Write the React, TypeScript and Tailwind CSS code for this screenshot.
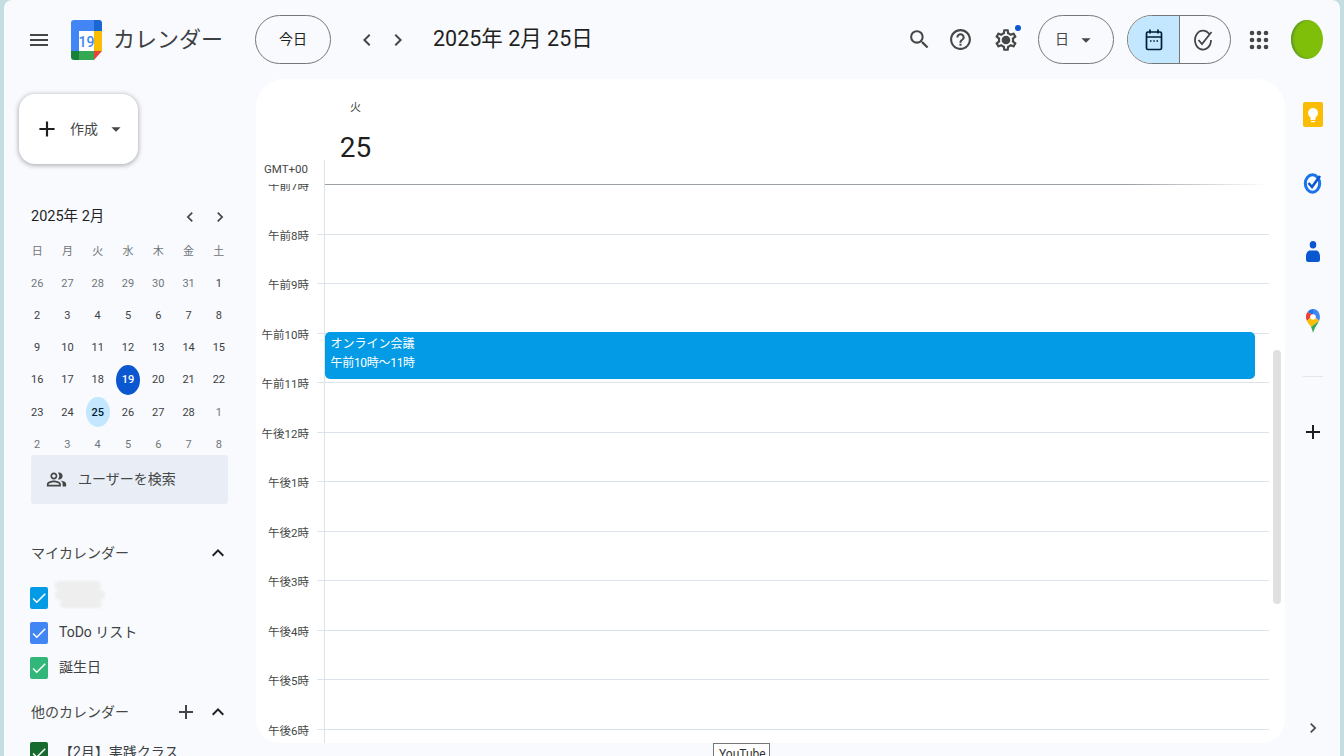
import {
  MdAdd,
  MdArrowDropDown,
  MdCheck,
  MdChevronLeft,
  MdChevronRight,
  MdExpandLess,
  MdHelpOutline,
  MdMenu,
  MdOutlinePeopleAlt,
  MdOutlineSettings,
  MdSearch,
} from "react-icons/md";

const FONT = "font-['Roboto','Noto_Sans_CJK_JP',sans-serif]";

const weekDays = ["日", "月", "火", "水", "木", "金", "土"];
const days = [
  26, 27, 28, 29, 30, 31, 1,
  2, 3, 4, 5, 6, 7, 8,
  9, 10, 11, 12, 13, 14, 15,
  16, 17, 18, 19, 20, 21, 22,
  23, 24, 25, 26, 27, 28, 1,
  2, 3, 4, 5, 6, 7, 8,
];
const hours = [
  "午前7時", "午前8時", "午前9時", "午前10時", "午前11時", "午後12時",
  "午後1時", "午後2時", "午後3時", "午後4時", "午後5時", "午後6時",
];

function CalendarLogo() {
  return (
    <svg width="31" height="40" viewBox="0 0 31 40" className="shrink-0">
      <path d="M3 0H23V11H8V31H0V3a3 3 0 0 1 3-3z" fill="#4285f4" />
      <path d="M23 0h5a3 3 0 0 1 3 3v8h-8z" fill="#1967d2" />
      <rect x="23" y="11" width="8" height="20" fill="#fbbc04" />
      <rect x="8" y="31" width="15" height="9" fill="#34a853" />
      <path d="M0 31h8v9H3a3 3 0 0 1-3-3z" fill="#188038" />
      <path d="M23 31h8l-8 9z" fill="#ea4335" />
      <rect x="8" y="11" width="15" height="20" fill="#fff" />
      <text x="15.5" y="26.5" textAnchor="middle" fontSize="14" fontFamily="Roboto" fontWeight="500" fill="#4285f4">19</text>
    </svg>
  );
}

function Checkbox({ color }: { color: string }) {
  return (
    <span className={`flex h-[22px] w-[18px] shrink-0 items-center justify-center rounded-[2px] text-white ${color}`}>
      <MdCheck size={18} />
    </span>
  );
}

function MiniCalendar() {
  return (
    <div className="ml-[18px] grid w-[212px] grid-cols-7 text-center text-[11px] leading-none">
      {weekDays.map((d) => (
        <div key={d} className="flex h-[32.2px] items-center justify-center text-[#70757a]">{d}</div>
      ))}
      {days.map((d, i) => {
        const muted = i < 6 || i > 33;
        return (
          <div key={i} className="flex h-[32.2px] items-center justify-center">
            {i === 24 && <span className="flex h-[30px] w-[24px] items-center justify-center rounded-[50%] bg-[#0b57d0] font-medium text-white">{d}</span>}
            {i === 30 && <span className="flex h-[30px] w-[24px] items-center justify-center rounded-[50%] bg-[#c2e7ff] font-medium text-[#001d35]">{d}</span>}
            {i !== 24 && i !== 30 && <span className={muted ? "text-[#70757a]" : "text-[#3c4043]"}>{d}</span>}
          </div>
        );
      })}
    </div>
  );
}

function Sidebar() {
  return (
    <aside className="w-[252px] shrink-0 text-[#1f1f1f]">
      <div className="ml-[15px] mt-[15px] flex h-[70px] w-[119px] items-center rounded-2xl bg-white pl-[15px] shadow-[0_1px_4px_1px_rgba(60,64,67,0.35)]">
        <MdAdd size={26} className="text-[#1f1f1f]" />
        <span className="ml-[10px] text-[14px] text-[#444746]">作成</span>
        <MdArrowDropDown size={22} className="ml-[7px] text-[#444746]" />
      </div>

      <div className="ml-[27px] mt-[43px] flex h-5 w-[200px] items-center justify-between text-[14.5px]">
        <span>2025年 2月</span>
        <span className="flex gap-[10px] pr-[1px] text-[#444746]">
          <MdChevronLeft size={20} />
          <MdChevronRight size={20} />
        </span>
      </div>

      <div className="mt-2">
        <MiniCalendar />
      </div>

      <div className="relative ml-[27px] -mt-[5px] flex h-[49px] w-[197px] items-center rounded-[3px] bg-[#e9eef6] pl-[15px] text-[14px] text-[#444746]">
        <MdOutlinePeopleAlt size={21} />
        <span className="ml-[11px]">ユーザーを検索</span>
      </div>

      <div className="ml-[27px] mt-[37px] flex h-6 w-[199px] items-center justify-between text-[14px] text-[#444746]">
        <span>マイカレンダー</span>
        <MdExpandLess size={24} className="text-[#1f1f1f]" />
      </div>

      <div className="ml-[26px] mt-[15px] text-[14px] text-[#3c4043]">
        <div className="flex h-[35px] items-center gap-[7px]">
          <Checkbox color="bg-[#039be5]" />
          <span className="-mt-[6px] flex flex-col gap-0 blur-[1px]">
            <span className="h-[9px] w-[46px] rounded-full bg-[#eeeeee]" />
            <span className="h-[10px] w-[50px] rounded-full bg-[#eeeeee]" />
            <span className="ml-[5px] h-[8px] w-[42px] rounded-full bg-[#eeeeee]" />
          </span>
        </div>
        <div className="flex h-[35px] items-center gap-[11px]">
          <Checkbox color="bg-[#4285f4]" />
          <span>ToDo リスト</span>
        </div>
        <div className="flex h-[35px] items-center gap-[11px]">
          <Checkbox color="bg-[#33b679]" />
          <span>誕生日</span>
        </div>
      </div>

      <div className="ml-[27px] mt-[15px] flex h-6 w-[199px] items-center text-[14px] text-[#444746]">
        <span>他のカレンダー</span>
        <MdAdd size={24} className="ml-auto" />
        <MdExpandLess size={24} className="ml-[8px] text-[#1f1f1f]" />
      </div>

      <div className="ml-[26px] mt-[11px] flex h-[35px] items-center gap-[11px] text-[14px] text-[#3c4043]">
        <Checkbox color="bg-[#176b2e]" />
        <span>【2月】実践クラス</span>
      </div>
    </aside>
  );
}

function DayGrid() {
  return (
    <main className="relative h-[664px] w-[1029px] shrink-0 overflow-hidden rounded-t-[28px] rounded-b-[24px] bg-white">
      <div className="flex h-[105px]">
        <div className="flex w-[68px] flex-col justify-end pb-[6px] pl-[8px] text-[11.5px] text-[#444746]">GMT+00</div>
        <div className="h-[24px] w-px self-end bg-[#dde3ea]" />
        <div className="flex w-[61px] flex-col items-center pt-[21px] text-[#1f1f1f]">
          <span className="text-[11px] text-[#444746]">火</span>
          <span className="mt-[10px] text-[28px] leading-[42px] font-normal">25</span>
        </div>
      </div>

      <div className="h-[559px] overflow-hidden">
        {hours.map((h, i) => (
          <div key={h} className="flex h-[49.55px]">
            <span className="-mt-[7px] h-[18px] w-[53px] shrink-0 text-right text-[11.5px] leading-[18px] text-[#444746]">{h}</span>
            {i === 0 ? (
              <>
                <div className="w-[15px] shrink-0" />
                <div className="w-[945px] border-l border-[#dde3ea]">
                  <div className="h-px bg-linear-to-r from-[#9aa0a6] via-[#9aa0a6] via-85% to-transparent" />
                </div>
              </>
            ) : (
              <>
                <div className="ml-[8px] w-[7px] shrink-0 border-t border-[#dde3ea]" />
                <div className="w-[945px] border-l border-t border-[#dde3ea]" />
              </>
            )}
          </div>
        ))}
      </div>

      {/* event sits over the hour grid */}
      <div className="absolute left-[68.5px] top-[253px] h-[47px] w-[930px] rounded-[5px] bg-[#039be5] pl-[6px] pt-[3px] text-[12px] leading-[19px] text-white">
        <div>オンライン会議</div>
        <div className="tracking-[-0.3px]">午前10時～11時</div>
      </div>

      <div className="absolute left-[1017px] top-[271px] h-[254px] w-2 rounded-full bg-[#e0e0e0]" />
    </main>
  );
}

function SideRail() {
  return (
    <div className="flex h-[677px] w-[55px] shrink-0 flex-col items-center">
      <div className="flex h-[69px] w-full items-center justify-center pt-[1px]">
        <svg width="20" height="25" viewBox="0 0 20 25">
          <rect width="20" height="25" rx="2" fill="#fbbc04" />
          <circle cx="10" cy="11" r="5" fill="#fff" />
          <rect x="7.5" y="15" width="5" height="3" fill="#fff" />
          <rect x="8" y="19" width="4" height="1.2" fill="#fff" />
        </svg>
      </div>
      <div className="flex h-[69px] w-full items-center justify-center">
        <svg width="20" height="24" viewBox="0 0 20 24">
          <ellipse cx="9.5" cy="12.5" rx="7.2" ry="8.7" fill="none" stroke="#1a73e8" strokeWidth="3" />
          <path d="M5.5 12l3.5 4 8-11" fill="none" stroke="#0b57d0" strokeWidth="2.6" />
        </svg>
      </div>
      <div className="flex h-[69px] w-full items-center justify-center">
        <svg width="14" height="21" viewBox="0 0 14 21">
          <ellipse cx="7" cy="3.800" rx="3.300" ry="3.800" fill="#0b57d0" />
          <path d="M4 9.500h6c2.500 0 4 3 4 6v3a2.500 2.500 0 0 1-2.500 2.500h-9A2.500 2.500 0 0 1 0 18.500v-3c0-3 1.500-6 4-6z" fill="#0b57d0" />
        </svg>
      </div>
      <div className="flex h-[69px] w-full items-center justify-center">
        <svg width="14" height="24" viewBox="0 0 14 24">
          <path d="M7 0a7 8 0 0 1 6 12L7 6z" fill="#4285f4" />
          <path d="M7 0a7 8 0 0 0-5.500 3L7 6z" fill="#1a73e8" />
          <path d="M1.500 3a7 8 0 0 0-.5 9L7 6z" fill="#ea4335" />
          <path d="M1 12c1.500 3 3 4 4 6l8-6-6-6z" fill="#fbbc04" />
          <path d="M5 18c.8 1.500 1.500 3.500 2 6 1-4.500 4-8 6-12z" fill="#34a853" />
          <circle cx="7" cy="8" r="2.800" fill="#fff" />
        </svg>
      </div>
      <div className="mt-[21px] h-px w-5 bg-[#e3e6ea]" />
      <div className="mt-[43px]">
        <MdAdd size={24} className="text-[#1f1f1f]" />
      </div>
      <div className="mt-auto mb-[18px]">
        <MdChevronRight size={20} className="text-[#444746]" />
      </div>
    </div>
  );
}

export default function App() {
  return (
    <div className={`relative h-[756px] w-[1344px] overflow-hidden bg-[#c4dde0] px-[4px] ${FONT}`}>
      <div className="h-[756px] rounded-t-[8px] bg-[#f8fafd]">
        <header className="flex h-[79px] items-center text-[#1f1f1f]">
          <MdMenu size={24} className="ml-[23px] text-[#444746]" />
          <div className="ml-[20px]"><CalendarLogo /></div>
          <span className="ml-[11px] w-[110px] text-[22px] text-[#3c4043]">カレンダー</span>
          <button className="ml-[32px] h-[49px] w-[76px] rounded-full border border-[#747775] text-[14px] text-[#1f1f1f]">今日</button>
          <MdChevronLeft size={24} className="ml-[24px] text-[#444746]" />
          <MdChevronRight size={24} className="ml-[7px] text-[#444746]" />
          <span className="ml-[23px] text-[21.5px] text-[#1f1f1f]">2025年 2月 25日</span>

          <MdSearch size={25} className="ml-auto text-[#444746]" />
          <MdHelpOutline size={25} className="ml-[16px] text-[#444746]" />
          <span className="relative ml-[20px]">
            <MdOutlineSettings size={26} className="text-[#444746]" />
            <span className="absolute left-[10px] top-[10px] h-[6px] w-[6px] rounded-full bg-[#444746]" />
            <span className="absolute -right-[2px] top-[-2px] h-[6px] w-[6px] rounded-full bg-[#0b57d0]" />
          </span>
          <button className="ml-[19px] flex h-[49px] w-[76px] items-center justify-center rounded-full border border-[#747775] text-[14px] text-[#444746]">
            日
            <MdArrowDropDown size={22} className="ml-[6px]" />
          </button>
          <div className="ml-[13px] flex h-[49px] w-[104px] overflow-hidden rounded-full border border-[#747775]">
            <span className="flex w-[52px] items-center justify-center border-r border-[#747775] bg-[#c2e7ff] text-[#001d35]">
              <svg width="18" height="22" viewBox="0 0 18 22" fill="none" stroke="currentColor" strokeWidth="1.700">
                <rect x="1.500" y="3" width="15" height="17.500" rx="1.500" />
                <path d="M1.500 8h15M5 .5v4M13 .5v4" />
                <path d="M5 12h1.500M8.300 12h1.500M11.500 12h1.500" />
              </svg>
            </span>
            <span className="flex flex-1 items-center justify-center pr-[4px] text-[#444746]">
              <svg width="20" height="22" viewBox="0 0 20 22" fill="none" stroke="currentColor" strokeWidth="1.800">
                <path d="M16.500 5.500A8 9.500 0 1 0 18 11" />
                <path d="M5.500 11l3.500 4 9.500-12" />
              </svg>
            </span>
          </div>
          <svg width="28" height="28" viewBox="0 0 28 28" className="ml-[14px] text-[#444746]" fill="currentColor">
            {[7, 14, 21].map((y) =>
              [7, 14, 21].map((x) => <circle key={`${x}-${y}`} cx={x} cy={y} r="2.300" />),
            )}
          </svg>
          <span className="ml-[18px] mr-[17px] h-[39px] w-[32px] rounded-[50%] bg-[#7fbf0a] shadow-[inset_2px_0_2px_rgba(90,140,50,0.8)]" />
        </header>

        <div className="flex">
          <Sidebar />
          <DayGrid />
          <SideRail />
        </div>
      </div>

      {/* browser tooltip poking in from the bottom edge */}
      <div className="absolute left-[713px] top-[743px] h-[24px] w-[57px] border border-[#767676] bg-white pl-[5px] text-[12px] leading-[20px] text-[#333]">YouTube</div>
    </div>
  );
}
